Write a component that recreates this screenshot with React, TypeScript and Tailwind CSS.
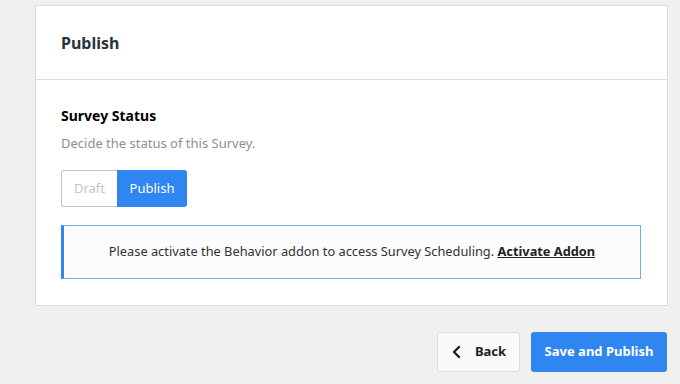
import React from "react";

const App: React.FC = () => {
  return (
    <div className="w-[680px] h-[384px] bg-[#f0f0f1] pt-[5px] font-['Noto_Sans',sans-serif] text-[#1d2327] overflow-hidden">
      <div className="ml-[35px] w-[633px] bg-white border border-[#dcdcde]">
        <div className="h-[74px] flex items-center px-[25px] border-b border-[#dcdcde]">
          <h2 className="text-[16px] font-bold text-[#2c3338]">Publish</h2>
        </div>
        <div className="px-[25px] pt-[26px] pb-[26px]">
          <h3 className="text-[14px] font-bold leading-[20px] text-black">Survey Status</h3>
          <p className="mt-[8px] text-[13px] leading-[18px] text-[#8c8f94]">
            Decide the status of this Survey.
          </p>
          <div className="mt-[18px] flex h-[37px]">
            <button className="w-[56px] border border-[#c3c4c7] border-r-0 rounded-l-[3px] text-[13px] text-[#c3c4c7] bg-white">
              Draft
            </button>
            <button className="w-[70px] rounded-r-[3px] text-[13px] text-white bg-[#2f86f0]">
              Publish
            </button>
          </div>
          <div className="mt-[18px] w-[580px] h-[54px] flex items-center justify-center bg-[#fcfcfc] border border-[#72aee6] border-l-[3px] border-l-[#2f86f0] text-[12.8px] text-[#2c3338]">
            <span>
              Please activate the Behavior addon to access Survey Scheduling.{" "}
              <a className="font-bold underline text-[#1d2327]">Activate Addon</a>
            </span>
          </div>
        </div>
      </div>
      <div className="mt-[26px] w-[667px] flex justify-end gap-[11px]">
        <button className="w-[83px] h-[40px] flex items-center justify-center gap-[12px] bg-[#f9f9f9] border border-[#dcdcde] rounded-[3px] text-[13px] font-bold text-[#1d2327]">
          <svg width="12" height="14" viewBox="0 0 12 14" fill="none">
            <path d="M8 2 L3 7 L8 12" stroke="#1d2327" strokeWidth="2.4" strokeLinecap="round" strokeLinejoin="round" />
          </svg>
          Back
        </button>
        <button className="w-[136px] h-[40px] bg-[#2f86f0] rounded-[3px] text-[13px] font-bold text-white">
          Save and Publish
        </button>
      </div>
    </div>
  );
};

export default App;
